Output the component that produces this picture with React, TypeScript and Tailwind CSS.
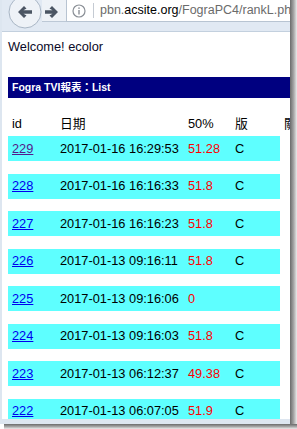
import React from 'react';

type Row = { id: string; date: string; v50: string; ban: string; visited?: boolean };

const rows: Row[] = [
  { id: '229', date: '2017-01-16 16:29:53', v50: '51.28', ban: 'C', visited: true },
  { id: '228', date: '2017-01-16 16:16:33', v50: '51.8', ban: 'C' },
  { id: '227', date: '2017-01-16 16:16:23', v50: '51.8', ban: 'C' },
  { id: '226', date: '2017-01-13 09:16:11', v50: '51.8', ban: 'C' },
  { id: '225', date: '2017-01-13 09:16:06', v50: '0', ban: '' },
  { id: '224', date: '2017-01-13 09:16:03', v50: '51.8', ban: 'C' },
  { id: '223', date: '2017-01-13 06:12:37', v50: '49.38', ban: 'C' },
  { id: '222', date: '2017-01-13 06:07:05', v50: '51.9', ban: 'C' },
];

const font = { fontFamily: '"Liberation Sans", "Noto Sans CJK TC", sans-serif' };

const BrowserBar: React.FC = () => (
  <div className="h-[32px] bg-[#e1e9f3] border-b border-[#c3d0de] flex relative shrink-0">
    <svg width="64" height="31" viewBox="0 0 64 31" className="shrink-0">
      <rect x="40" y="0" width="24" height="22" fill="#eef2f7" />
      <line x1="40" y1="21.5" x2="64" y2="21.5" stroke="#bcc8d6" />
      <circle cx="23" cy="12" r="16" fill="#eef2f7" stroke="#a9b6c5" />
      <path d="M16 12 L22 6 L24.5 8.5 L21.5 10.3 L30 10.3 L30 13.7 L21.5 13.7 L24.5 15.5 L22 18 Z" fill="#4b5563" />
      <path d="M56 12 L50 6 L47.5 8.5 L50.5 10.3 L43 10.3 L43 13.7 L50.5 13.7 L47.5 15.5 L50 18 Z" fill="#4b5563" />
    </svg>
    <div className="h-[22px] flex-1 bg-white border-l border-b border-[#b8c4d2] flex items-center overflow-hidden whitespace-nowrap">
      <svg width="14" height="14" viewBox="0 0 14 14" className="ml-[5px] shrink-0">
        <circle cx="7" cy="7" r="6" fill="none" stroke="#8a8f96" strokeWidth="1.2" />
        <rect x="6.3" y="6" width="1.4" height="4.5" fill="#8a8f96" />
        <rect x="6.3" y="3.4" width="1.4" height="1.5" fill="#8a8f96" />
      </svg>
      <div className="w-px h-[15px] bg-[#c5cbd3] ml-[7px] shrink-0" />
      <span className="ml-[6px] text-[12.5px] text-[#6b6b6b]" style={font}>
        pbn.<span className="text-black">acsite.org</span>/FograPC4/rankL.php
      </span>
    </div>
  </div>
);

const Page: React.FC = () => (
  <div className="flex-1 bg-white overflow-hidden text-[12.8px] text-black" style={font}>
    <div className="w-[320px] pl-[6px] pt-[7px]">
      <div className="h-[16px] leading-[16px] text-[#0a0a28]">Welcome! ecolor</div>
      <div className="mt-[22px] h-[21px] bg-[#000080] text-white font-bold text-[10.5px] flex items-center pl-[4px]">
        Fogra TVI報表：List
      </div>
      <div className="mt-[18px] h-[16px] leading-[16px] flex pl-[4px] whitespace-nowrap">
        <span className="w-[48px] shrink-0">id</span>
        <span className="w-[128px] shrink-0">日期</span>
        <span className="w-[47px] shrink-0">50%</span>
        <span className="w-[49px] shrink-0">版</span>
        <span className="shrink-0">關</span>
      </div>
      <div className="mt-[4px] flex flex-col gap-[12.5px]">
        {rows.map(r => (
          <div key={r.id} className="w-[272px] h-[25px] bg-[#5effff] flex items-center pl-[4px] whitespace-nowrap">
            <a href="#" className={`w-[48px] shrink-0 underline ${r.visited ? 'text-[#551a8b]' : 'text-[#0000ee]'}`}>{r.id}</a>
            <span className="w-[128px] shrink-0">{r.date}</span>
            <span className="w-[47px] shrink-0 text-[#ff0000]">{r.v50}</span>
            <span className="w-[40px] shrink-0">{r.ban}</span>
          </div>
        ))}
      </div>
    </div>
  </div>
);

export default function App() {
  return (
    <div className="w-[297px] h-[429px] bg-white flex flex-col overflow-hidden">
      <div className="flex flex-1 min-h-0">
        <div className="w-[290px] flex flex-col border-l-2 border-[#dde6f0]">
          <BrowserBar />
          <Page />
          <div className="h-[5px] bg-[#dde6f0] shrink-0" />
        </div>
        <div className="w-[7px] bg-gradient-to-r from-[#6b6b6b] via-[#a3a3a3] to-[#ececec]" />
      </div>
      <div className="h-[5px] ml-[4px] bg-gradient-to-b from-[#6b6b6b] via-[#a3a3a3] to-[#ececec]" />
    </div>
  );
}
